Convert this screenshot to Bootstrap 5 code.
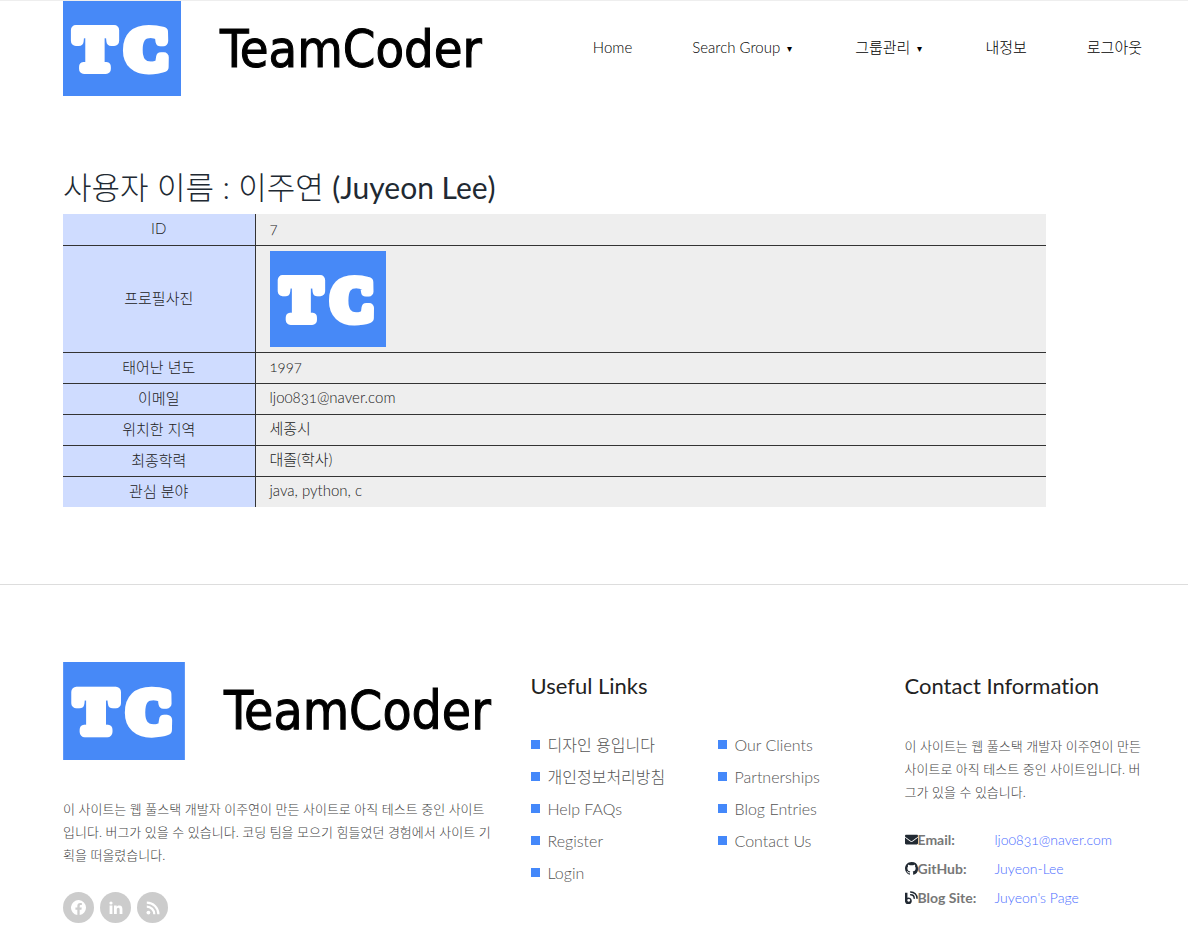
<!DOCTYPE html>
<html lang="ko">
<head>
<meta charset="utf-8">
<meta name="viewport" content="width=device-width, initial-scale=1">
<title>TeamCoder</title>
<link href="https://cdn.jsdelivr.net/npm/bootstrap@5.3.0/dist/css/bootstrap.min.css" rel="stylesheet">
<style>
  body { font-family: Lato, "Noto Sans CJK KR", sans-serif; font-size: 15px; font-weight: 300; font-variant-numeric: oldstyle-nums; font-variant-ligatures: none; color: #222; background: #fff; }
  a { text-decoration: none; }
  .page-wrap { padding-left: 63px; padding-right: 33px; }
  .site-header { border-top: 1px solid #eee; }
  .brand { gap: 39px; }
  .brand-mark { display: block; flex: none; }
  .brand-mark text { font-family: "Liberation Serif", serif; font-weight: 700; font-size: 60px; fill: #fff; stroke: #fff; stroke-width: 10px; stroke-linejoin: round; }
  .brand-name { font-family: "DejaVu Sans Condensed", "DejaVu Sans", sans-serif; font-weight: 400; font-size: 52px; line-height: 72px; color: #000; -webkit-text-stroke: 1px #000; }
  .brand-foot .brand-name { font-size: 53px; }
  .main-nav { gap: 60px; padding-right: 13px; }
  .main-nav .nav-link { padding: 0; color: #000; line-height: 24px; margin-top: -2px; }
  .caret { font-size: 10px; margin: 0 3px 0 7px; vertical-align: 1px; }
  .profile { padding-top: 71px; padding-bottom: 77px; }
  .profile h1 { font-size: 31px; line-height: 40px; font-weight: 300; color: #212932; margin: 0 0 7px; }
  .profile h1 span { font-weight: 400; font-size: 30px; }
  .info-table { width: 90%; border-collapse: collapse; }
  .info-table th { width: 192px; font-weight: 300; text-align: center; background: #cfdcff; border-right: 1px solid #333; }
  .info-table td { background: #eee; padding: 0 14px; }
  .info-table tr + tr > * { border-top: 1px solid #333; }
  .info-table th, .info-table td { height: 31px; line-height: 24px; vertical-align: middle; padding-bottom: 3px; }
  .info-table .photo-cell { padding-top: 5px; padding-bottom: 5px; }
  .site-footer { border-top: 1px solid #ddd; padding-top: 77px; padding-bottom: 6px; }
  .site-footer .row { --bs-gutter-x: 30px; }
  .site-footer h2 { font-size: 22px; line-height: 24px; font-weight: 400; color: #222; margin: 12px 0 31px; }
  .blurb { font-size: 13px; line-height: 23px; color: #444; margin: 0; }
  .about { margin-top: 38px; margin-bottom: 25px; }
  .social { gap: 6px; }
  .social a { width: 31px; height: 31px; border-radius: 50%; background: #ccc; color: #fff; }
  .links { font-size: 16px; }
  .links li { height: 32px; line-height: 32px; }
  .links a { color: #555; }
  .links li::before { content: ""; display: inline-block; width: 9px; height: 9px; margin-right: 8px; background: #4488fa; vertical-align: 2px; }
  .links-more { padding-top: 67px; }
  .contact-blurb { margin-top: 37px; }
  .contact-list { display: grid; grid-template-columns: 90px 1fr; font-size: 14px; line-height: 29px; margin: 21px 0 0; }
  .contact-list dt { font-weight: 700; color: #777; white-space: nowrap; }
  .contact-list dd { margin: 0; }
  .contact-list a { color: #4c6eff; }
  .contact-list svg { display: inline-block; vertical-align: -1px; fill: #212932; }
</style>
</head>
<body>
<header class="site-header page-wrap d-flex align-items-center justify-content-between">
  <a href="#" class="brand d-flex align-items-center">
    <svg class="brand-mark" width="118" height="95" viewBox="0 0 118 95" role="img" aria-label="TC"><rect width="118" height="95" fill="#4789f7"/><text x="12" y="68">T</text><text x="62" y="68">C</text></svg>
    <span class="brand-name">TeamCoder</span>
  </a>
  <nav class="nav main-nav flex-nowrap text-nowrap" aria-label="Main">
    <a class="nav-link" href="#">Home</a>
    <a class="nav-link" href="#">Search Group<span class="caret">▾</span></a>
    <a class="nav-link" href="#">그룹관리<span class="caret">▾</span></a>
    <a class="nav-link" href="#">내정보</a>
    <a class="nav-link" href="#">로그아웃</a>
  </nav>
</header>

<main class="profile page-wrap">
  <h1>사용자 이름 : 이주연 <span>(Juyeon Lee)</span></h1>
  <table class="info-table">
    <tbody>
      <tr><th scope="row">ID</th><td>7</td></tr>
      <tr><th scope="row">프로필사진</th><td class="photo-cell"><svg class="brand-mark" width="116" height="96" viewBox="0 0 118 95" preserveAspectRatio="none" role="img" aria-label="TC"><rect width="118" height="95" fill="#4789f7"/><text x="12" y="68">T</text><text x="62" y="68">C</text></svg></td></tr>
      <tr><th scope="row">태어난 년도</th><td>1997</td></tr>
      <tr><th scope="row">이메일</th><td>ljo0831@naver.com</td></tr>
      <tr><th scope="row">위치한 지역</th><td>세종시</td></tr>
      <tr><th scope="row">최종학력</th><td>대졸(학사)</td></tr>
      <tr><th scope="row">관심 분야</th><td>java, python, c</td></tr>
    </tbody>
  </table>
</main>

<footer class="site-footer page-wrap">
  <div class="row">
    <div class="col-5">
      <a href="#" class="brand brand-foot d-flex align-items-center">
        <svg class="brand-mark" width="122" height="98" viewBox="0 0 118 95" role="img" aria-label="TC"><rect width="118" height="95" fill="#4789f7"/><text x="12" y="68">T</text><text x="62" y="68">C</text></svg>
        <span class="brand-name">TeamCoder</span>
      </a>
      <p class="blurb about">이 사이트는 웹 풀스택 개발자 이주연이 만든 사이트로 아직 테스트 중인 사이트<br>입니다. 버그가 있을 수 있습니다. 코딩 팀을 모으기 힘들었던 경험에서 사이트 기<br>획을 떠올렸습니다.</p>
      <div class="social d-flex">
        <a href="#" class="d-flex align-items-center justify-content-center" aria-label="Facebook"><svg width="15" height="15" viewBox="0 0 16 16" fill="currentColor"><path d="M16 8.05A8 8 0 1 0 6.75 16v-5.6H4.72V8.05h2.03V6.28c0-2.02 1.2-3.13 3.02-3.13.88 0 1.8.16 1.8.16v1.98h-1.01c-1 0-1.31.62-1.31 1.26v1.5h2.23l-.36 2.33H9.25V16A8 8 0 0 0 16 8.05z"/></svg></a>
        <a href="#" class="d-flex align-items-center justify-content-center" aria-label="LinkedIn"><svg width="14" height="14" viewBox="0 0 14 14" fill="currentColor"><circle cx="2" cy="2" r="1.6"/><path d="M.6 4.6h2.8V13H.6zM5 4.6h2.7v1.2c.5-.9 1.4-1.4 2.6-1.4 2.5 0 3.1 1.6 3.1 3.9V13h-2.8V8.8c0-1.1-.1-2.1-1.3-2.1-1.3 0-1.5 1-1.5 2.1V13H5z"/></svg></a>
        <a href="#" class="d-flex align-items-center justify-content-center" aria-label="RSS"><svg width="14" height="14" viewBox="0 0 14 14" fill="none" stroke="currentColor" stroke-width="2.2"><circle cx="2.4" cy="11.6" r="1.9" fill="currentColor" stroke="none"/><path d="M.8 5.7a7.5 7.5 0 0 1 7.5 7.5M.8 1.6A11.6 11.6 0 0 1 12.4 13.2"/></svg></a>
      </div>
    </div>
    <div class="col-2">
      <h2 class="text-nowrap">Useful Links</h2>
      <ul class="links list-unstyled text-nowrap mb-0">
        <li><a href="#">디자인 용입니다</a></li>
        <li><a href="#">개인정보처리방침</a></li>
        <li><a href="#">Help FAQs</a></li>
        <li><a href="#">Register</a></li>
        <li><a href="#">Login</a></li>
      </ul>
    </div>
    <div class="col-2">
      <ul class="links links-more list-unstyled text-nowrap mb-0">
        <li><a href="#">Our Clients</a></li>
        <li><a href="#">Partnerships</a></li>
        <li><a href="#">Blog Entries</a></li>
        <li><a href="#">Contact Us</a></li>
      </ul>
    </div>
    <div class="col-3">
      <h2>Contact Information</h2>
      <p class="blurb contact-blurb">이 사이트는 웹 풀스택 개발자 이주연이 만든<br>사이트로 아직 테스트 중인 사이트입니다. 버<br>그가 있을 수 있습니다.</p>
      <dl class="contact-list">
        <dt><svg width="13" height="13" viewBox="0 0 512 512"><path d="M502 191c4-3 10 0 10 5v204c0 26-22 48-48 48H48c-26 0-48-22-48-48V196c0-5 6-8 10-5 22 17 52 40 155 114 21 16 57 48 91 48s71-33 91-48c103-74 133-97 155-114zM256 320c23 0 57-29 74-42 133-97 143-105 174-129 5-4 8-11 8-18v-19c0-26-22-48-48-48H48c-26 0-48 22-48 48v19c0 7 3 14 8 18 31 24 41 32 174 129 17 13 51 42 74 42z"/></svg>Email:</dt>
        <dd><a href="#">ljo0831@naver.com</a></dd>
        <dt><svg width="13" height="13" viewBox="0 0 16 16"><path d="M8 0C3.58 0 0 3.58 0 8c0 3.54 2.29 6.53 5.47 7.59.4.07.55-.17.55-.38 0-.19-.01-.82-.01-1.49-2.01.37-2.53-.49-2.69-.94-.09-.23-.48-.94-.82-1.13-.28-.15-.68-.52-.01-.53.63-.01 1.08.58 1.23.82.72 1.21 1.87.87 2.33.66.07-.52.28-.87.51-1.07-1.78-.2-3.64-.89-3.64-3.95 0-.87.31-1.59.82-2.15-.08-.2-.36-1.02.08-2.12 0 0 .67-.21 2.2.82a7.6 7.6 0 0 1 4 0c1.53-1.04 2.2-.82 2.2-.82.44 1.1.16 1.92.08 2.12.51.56.82 1.27.82 2.15 0 3.07-1.87 3.75-3.65 3.95.29.25.54.73.54 1.48 0 1.07-.01 1.93-.01 2.2 0 .21.15.46.55.38A8 8 0 0 0 8 0z"/></svg>GitHub:</dt>
        <dd><a href="#">Juyeon-Lee</a></dd>
        <dt><svg width="13" height="13" viewBox="0 0 16 16"><path d="M0 2h3v6.2A4.2 4.2 0 1 1 0 11.6zM4.6 9.7a1.8 1.8 0 1 0 0 3.6 1.8 1.8 0 0 0 0-3.6z" fill-rule="evenodd"/><path d="M7 1.2c4.4 0 7.8 3.4 7.8 7.8M7 4.7c2.5 0 4.3 1.8 4.3 4.3" fill="none" stroke="#212932" stroke-width="1.9" stroke-linecap="round"/></svg>Blog Site:</dt>
        <dd><a href="#">Juyeon's Page</a></dd>
      </dl>
    </div>
  </div>
</footer>
<script src="https://cdn.jsdelivr.net/npm/bootstrap@5.3.0/dist/js/bootstrap.bundle.min.js"></script>
</body>
</html>
